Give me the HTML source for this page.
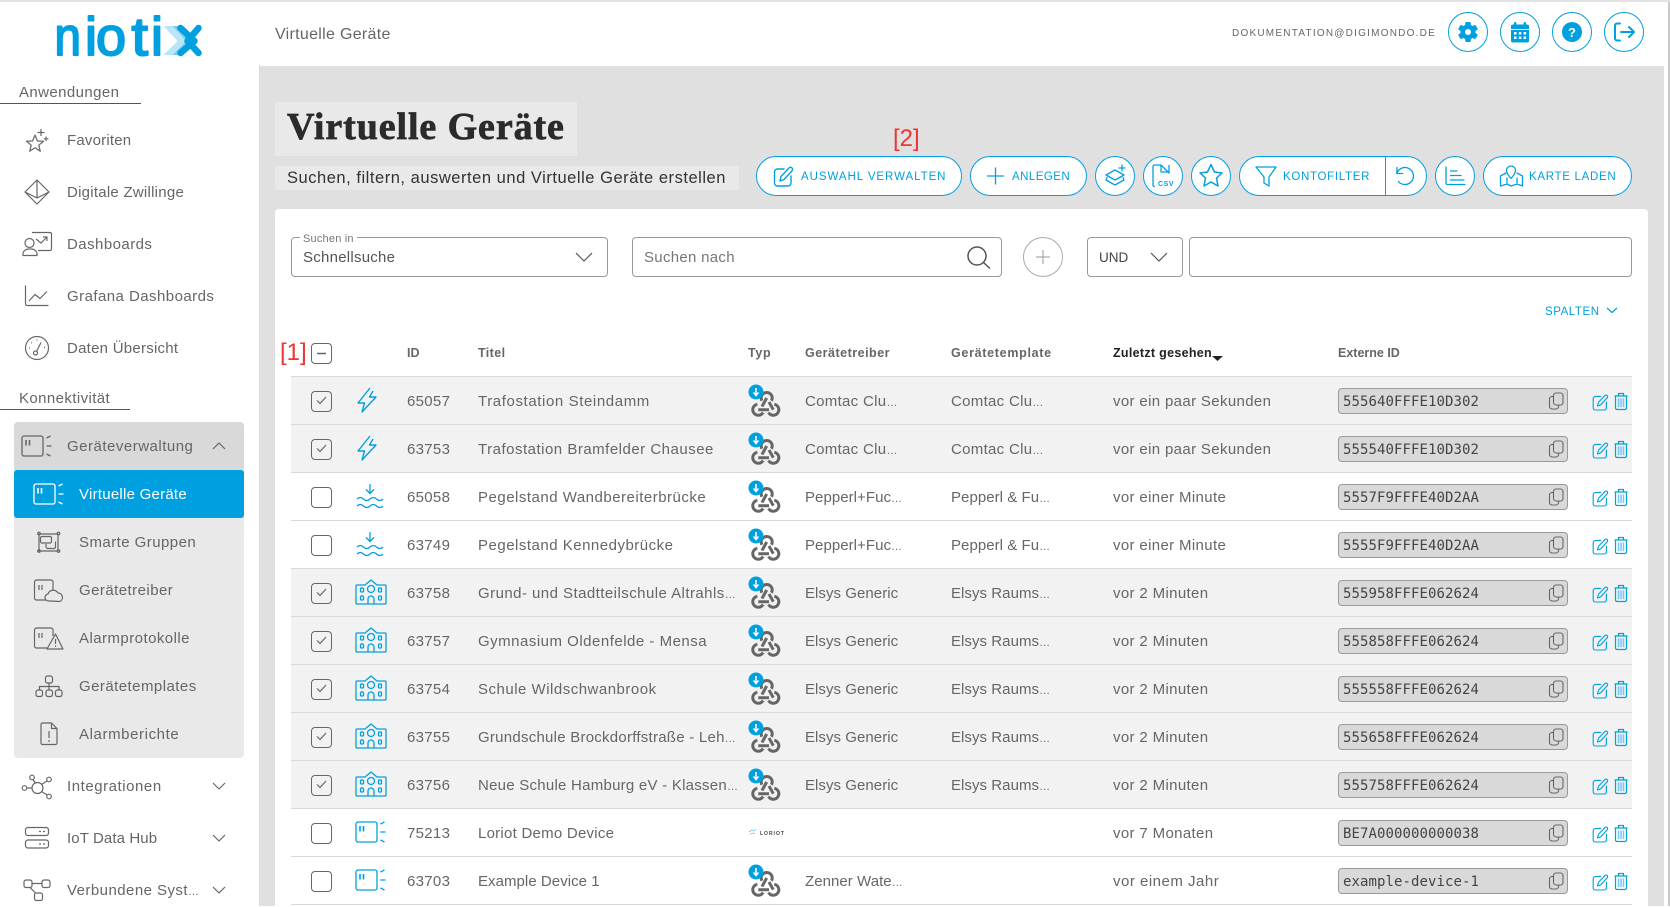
<!DOCTYPE html>
<html lang="de"><head><meta charset="utf-8"><title>Virtuelle Geräte</title>
<style>
*{box-sizing:border-box}
html,body{margin:0;padding:0;width:1670px;height:906px;overflow:hidden;background:#fff;font-family:"Liberation Sans",sans-serif;color:#666}
.a{position:absolute;white-space:nowrap}
svg{position:absolute;overflow:visible}
.ov{left:0;top:0;width:1670px;height:906px;z-index:5;pointer-events:none}
.nav{font-size:15px;letter-spacing:.45px;line-height:20px;color:#666;margin-top:1px}
i{font-style:normal;font-size:11px;letter-spacing:0}
.btn{position:absolute;top:156px;height:40px;background:#fff;border:1.3px solid #00a0e0;border-radius:20px;color:#00a0e0;font-size:11.5px;line-height:40px}
.btn span{position:absolute;white-space:nowrap}
.hbtn{position:absolute;top:12px;width:40px;height:40px;background:#fff;border:1.3px solid #00a0e0;border-radius:50%}
.inp{position:absolute;top:237px;height:40px;border:1.2px solid #999;border-radius:4px;background:#fff}
.th{position:absolute;top:345px;font-size:12.5px;font-weight:700;line-height:16px;color:#666;white-space:nowrap}
.r{position:absolute;left:291px;width:1341px;height:48px;border-top:1px solid #d9d9d9;font-size:15px;letter-spacing:.5px;line-height:48px;color:#666}
.r.s{background:#f2f2f2}
.r>span{position:absolute;top:1px;white-space:nowrap}
.id{left:116px;letter-spacing:.3px}.t{left:187px}.d{left:514px;letter-spacing:.05px}.m{left:660px;letter-spacing:.05px}.l{left:822px;letter-spacing:.35px}
.r>.x{left:1047px;top:11px;width:230px;height:26px;background:#d9d9d9;border:1.3px solid #999;border-radius:4px;font:14px/26px "DejaVu Sans Mono","Liberation Mono",monospace;letter-spacing:.07px;color:#444;padding-left:4px}
.c{position:absolute;left:20px;top:14px;width:21px;height:21px;border:1.5px solid #666;border-radius:4px;background:#fff}
.s .c{background:#f2f2f2}
.rs{left:0;top:-1px;width:1341px;height:48px}
</style></head><body>
<svg width="0" height="0" style="position:absolute"><defs>
<g id="device" fill="none" stroke-width="1.3"><rect x="-10.5" y="-10" width="21" height="20" rx="2"/><path d="M14 -8l4 -2M14 0h5M14 8l4 2"/><path d="M-6.500 -6V-.5M-3 -6V-.5" stroke-width="1.600"/></g>
<g id="bolt" fill="none" stroke="#00a0e0" stroke-width="1.4" stroke-linejoin="round"><path d="M3 -12L-9 3H-2.500L-5 12L9 -3H2.500L6 -9"/></g>
<g id="water" fill="none" stroke="#00a0e0" stroke-width="1.3"><path d="M0 -12V-3M-4 -6.500L0 -2.500L4 -6.500M-13 3q3.200 -3 6.500 0t6.500 0t6.500 0t6.500 0M-13 10q3.200 -3 6.500 0t6.500 0t6.500 0t6.500 0"/></g>
<g id="school" fill="none" stroke="#00a0e0" stroke-width="1.3" stroke-linejoin="round"><path d="M-14 -7H-6L0 -12L6 -7H14a1 1 0 0 1 1 1V11a1 1 0 0 1 -1 1H-14a1 1 0 0 1 -1 -1V-6a1 1 0 0 1 1 -1Z"/><circle cx="0" cy="-3" r="3.500"/><rect x="-10.500" y="-4" width="3" height="4" rx="1"/><rect x="7.500" y="-4" width="3" height="4" rx="1"/><rect x="-10.500" y="4" width="3" height="4" rx="1"/><rect x="7.500" y="4" width="3" height="4" rx="1"/><path d="M-3 12V7a3 3 0 0 1 6 0V12"/></g>
<g id="wh"><g fill="none" stroke="#666" stroke-width="3"><path d="M-4.060 -3.250A5.500 5.500 0 1 1 5.460 -3.250"/><path d="M-8.650 .3A5.500 5.500 0 1 0 -2.940 8.450"/><path d="M2.540 8.450A5.500 5.500 0 1 0 8.250 .3"/><path d="M.7 -6L-4 2.500M-7.700 5.700H3M7.300 5.700L3 -2"/></g><circle cx="-10" cy="-12" r="7.500" fill="#00a0e0"/><path d="M-10 -16V-9M-12.500 -11.500L-10 -8.500L-7.500 -11.500" fill="none" stroke="#fff" stroke-width="1.500"/></g>
<g id="copy" fill="none" stroke="#666" stroke-width="1.100"><rect x="-2.500" y="-8" width="9.500" height="12" rx="2.500"/><path d="M-2.500 -4.500H-4a2.500 2.500 0 0 0 -2.500 2.500V5.500A2.500 2.500 0 0 0 -4 8H0a2.500 2.500 0 0 0 2.500 -2.500V4"/></g>
<g id="edit" fill="none" stroke-width="1.400" stroke-linecap="round" stroke-linejoin="round"><path d="M1 -7H-5.500a3 3 0 0 0 -3 3V7a3 3 0 0 0 3 3H5a3 3 0 0 0 3 -3V0"/><path d="M-3 5L-2 .5L6 -8a1.900 1.900 0 0 1 3 2.800L1 3.500Z"/></g>
<g id="ed" stroke="#00a0e0"><use href="#edit" transform="scale(.8)"/></g>
<g id="trash" fill="none" stroke="#00a0e0" stroke-width="1.200"><path d="M-6.500 -5H6.500M-2.500 -5V-7.500H2.500V-5"/><path d="M-5.500 -5V7a1.500 1.500 0 0 0 1.500 1.500H4A1.500 1.500 0 0 0 5.500 7V-5"/><path d="M-2.500 -2.500V6M0 -2.500V6M2.500 -2.500V6" stroke="#73c8ee" stroke-width="1.500"/></g>
<g id="chk" fill="none" stroke="#666" stroke-width="1.200"><path d="M-4.500 .5L-1.500 3.500L4.500 -3"/></g>
</defs></svg>

<!-- backgrounds -->
<div class="a" style="left:0;top:0;width:1670px;height:2px;background:#e2e2e2"></div>
<div class="a" style="left:259px;top:66px;width:1405px;height:840px;background:#e0e0e0"></div>
<div class="a" style="left:259px;top:65px;width:1px;height:841px;background:#dcdcdc"></div>
<div class="a" style="left:1668px;top:2px;width:2px;height:904px;background:#c9c9c9"></div>

<!-- logo -->
<svg class="ov" style="z-index:6" viewBox="0 0 1670 906">
<g transform="translate(53.500,16)">
<g fill="#00a0e0" stroke="#00a0e0" stroke-width="2" stroke-linejoin="round" font-family="'Liberation Sans',sans-serif" font-size="54">
<text transform="translate(1,39) scale(.88,1)" x="0" y="0">n</text>
<text transform="translate(31.500,39)" x="0" y="0">i</text>
<text transform="translate(42.500,39) scale(1,1)" x="0" y="0">o</text>
<text transform="translate(78,39) scale(1.1,1)" x="0" y="0">t</text>
<text transform="translate(97.500,39)" x="0" y="0">i</text>
</g>
<path d="M110 10H119L133 25L119 39H110L124 25Z" fill="#b8e5f7"/>
<path d="M119 10H126L140 25L126 39H119L133 25Z" fill="#72cdf1"/>
<path d="M127 12L141 25L127 37M145 12L134 25L145 37" fill="none" stroke="#00a0e0" stroke-width="6.500" stroke-linecap="round" stroke-linejoin="round"/>
</g></svg>

<!-- sidebar -->
<div class="a nav" style="left:19px;top:82px;letter-spacing:.4px">Anwendungen</div>
<div class="a" style="left:0;top:103px;width:141px;height:1px;background:#555"></div>
<div class="a nav" style="left:67px;top:130px;letter-spacing:.2px">Favoriten</div>
<div class="a nav" style="left:67px;top:182px;letter-spacing:.25px">Digitale Zwillinge</div>
<div class="a nav" style="left:67px;top:234px">Dashboards</div>
<div class="a nav" style="left:67px;top:286px">Grafana Dashboards</div>
<div class="a nav" style="left:67px;top:338px;letter-spacing:.25px">Daten Übersicht</div>
<div class="a nav" style="left:19px;top:388px;letter-spacing:.4px">Konnektivität</div>
<div class="a" style="left:0;top:409px;width:130px;height:1px;background:#555"></div>
<div class="a" style="left:14px;top:422px;width:230px;height:336px;background:#e9e9e9;border-radius:4px"></div>
<div class="a" style="left:14px;top:422px;width:230px;height:48px;background:#d9d9d9;border-radius:4px 4px 0 0"></div>
<div class="a" style="left:14px;top:470px;width:230px;height:48px;background:#00a0e0;border-radius:3px"></div>
<div class="a nav" style="left:67px;top:436px;letter-spacing:.5px">Geräteverwaltung</div>
<div class="a nav" style="left:79px;top:484px;color:#fff;letter-spacing:.25px">Virtuelle Geräte</div>
<div class="a nav" style="left:79px;top:532px">Smarte Gruppen</div>
<div class="a nav" style="left:79px;top:580px">Gerätetreiber</div>
<div class="a nav" style="left:79px;top:628px">Alarmprotokolle</div>
<div class="a nav" style="left:79px;top:676px">Gerätetemplates</div>
<div class="a nav" style="left:79px;top:724px;letter-spacing:.6px">Alarmberichte</div>
<div class="a nav" style="left:67px;top:776px;letter-spacing:.55px">Integrationen</div>
<div class="a nav" style="left:67px;top:828px;letter-spacing:.1px">IoT Data Hub</div>
<div class="a nav" style="left:67px;top:880px">Verbundene Syst<i>…</i></div>

<!-- header -->
<div class="a" style="left:275px;top:25px;font-size:16px;letter-spacing:.3px;line-height:20px;color:#666">Virtuelle Geräte</div>
<div class="a" style="left:1232px;top:28px;font-size:10px;letter-spacing:1.23px;line-height:12px;color:#666">DOKUMENTATION@DIGIMONDO.DE</div>
<div class="hbtn" style="left:1448px"></div><div class="hbtn" style="left:1500px"></div><div class="hbtn" style="left:1552px"></div><div class="hbtn" style="left:1604px"></div>

<!-- title -->
<div class="a" style="left:275px;top:102px;width:302px;height:54px;background:#e9e9e9"></div>
<div class="a" style="left:287px;top:104px;font:700 38px/46px 'Liberation Serif',serif;letter-spacing:.9px;color:#2b2b2b;-webkit-text-stroke:.7px #2b2b2b">Virtuelle Geräte</div>
<div class="a" style="left:275px;top:166px;width:464px;height:24px;background:#e9e9e9"></div>
<div class="a" style="left:287px;top:167px;font-size:16.5px;letter-spacing:.53px;line-height:22px;color:#333">Suchen, filtern, auswerten und Virtuelle Geräte erstellen</div>
<div class="a" style="left:893px;top:124px;font-size:24px;line-height:30px;color:#f03333">[2]</div>

<!-- buttons -->
<div class="btn" style="left:756px;width:206px"><span style="left:44px;letter-spacing:.95px">AUSWAHL VERWALTEN</span></div>
<div class="btn" style="left:970px;width:117px"><span style="left:41px;letter-spacing:.45px">ANLEGEN</span></div>
<div class="btn" style="left:1095px;width:40px"></div>
<div class="btn" style="left:1143px;width:40px"></div>
<div class="btn" style="left:1191px;width:40px"></div>
<div class="btn" style="left:1239px;width:188px"><span style="left:43px;letter-spacing:.7px">KONTOFILTER</span><span style="left:145px;top:0;width:1.300px;height:38px;background:#00a0e0"></span></div>
<div class="btn" style="left:1435px;width:40px"></div>
<div class="btn" style="left:1483px;width:149px"><span style="left:45px;letter-spacing:.7px">KARTE LADEN</span></div>

<!-- card -->
<div class="a" style="left:275px;top:209px;width:1373px;height:697px;background:#fff;border-radius:4px 4px 0 0"></div>
<div class="inp" style="left:291px;width:317px"></div>
<div class="a" style="left:300px;top:233px;padding:0 3px;background:#fff;font-size:11px;letter-spacing:.2px;line-height:13px;color:#777">Suchen in</div>
<div class="a" style="left:303px;top:248px;font-size:15px;letter-spacing:.25px;line-height:20px;color:#555">Schnellsuche</div>
<div class="inp" style="left:632px;width:370px"></div>
<div class="a" style="left:644px;top:248px;font-size:15px;letter-spacing:.3px;line-height:20px;color:#777">Suchen nach</div>
<div class="a" style="left:1023px;top:237px;width:40px;height:40px;border:1.200px solid #aaa;border-radius:50%"></div>
<div class="inp" style="left:1087px;width:96px"></div>
<div class="a" style="left:1099px;top:248px;font-size:13.500px;line-height:20px;color:#444">UND</div>
<div class="inp" style="left:1189px;width:443px"></div>
<div class="a" style="left:1545px;top:304px;font-size:11.500px;line-height:16px;color:#00a0e0;letter-spacing:.55px">SPALTEN</div>

<!-- table header -->
<div class="a" style="left:280px;top:338px;font-size:24px;line-height:30px;color:#f03333">[1]</div>
<div class="a" style="left:311px;top:343px;width:21px;height:21px;border:1.500px solid #666;border-radius:4px"></div>
<div class="th" style="left:407px">ID</div>
<div class="th" style="left:478px;letter-spacing:.4px">Titel</div>
<div class="th" style="left:748px;letter-spacing:.7px">Typ</div>
<div class="th" style="left:805px;letter-spacing:.5px">Gerätetreiber</div>
<div class="th" style="left:951px;letter-spacing:.7px">Gerätetemplate</div>
<div class="th" style="left:1113px;color:#222;letter-spacing:.3px">Zuletzt gesehen</div>
<div class="th" style="left:1338px">Externe ID</div>

<!-- rows -->
<div class="r s" style="top:376px"><div class="c"></div><span class="id">65057</span><span class="t" style="letter-spacing:.6px">Trafostation Steindamm</span><span class="d" style="letter-spacing:.3px">Comtac Clu<i>…</i></span><span class="m" style="letter-spacing:.3px">Comtac Clu<i>…</i></span><span class="l">vor ein paar Sekunden</span><span class="x">555640FFFE10D302</span><svg class="rs"><use href="#chk" x="30.500" y="24"/><use href="#bolt" x="76" y="24"/><use href="#wh" x="475" y="28"/><use href="#copy" x="1265" y="25"/><use href="#ed" x="1309" y="26"/><use href="#trash" x="1330" y="25"/></svg></div>
<div class="r s" style="top:424px"><div class="c"></div><span class="id">63753</span><span class="t">Trafostation Bramfelder Chausee</span><span class="d" style="letter-spacing:.3px">Comtac Clu<i>…</i></span><span class="m" style="letter-spacing:.3px">Comtac Clu<i>…</i></span><span class="l">vor ein paar Sekunden</span><span class="x">555540FFFE10D302</span><svg class="rs"><use href="#chk" x="30.500" y="24"/><use href="#bolt" x="76" y="24"/><use href="#wh" x="475" y="28"/><use href="#copy" x="1265" y="25"/><use href="#ed" x="1309" y="26"/><use href="#trash" x="1330" y="25"/></svg></div>
<div class="r" style="top:472px"><div class="c"></div><span class="id">65058</span><span class="t">Pegelstand Wandbereiterbrücke</span><span class="d">Pepperl+Fuc<i>…</i></span><span class="m">Pepperl &amp; Fu<i>…</i></span><span class="l">vor einer Minute</span><span class="x">5557F9FFFE40D2AA</span><svg class="rs"><use href="#water" x="79" y="24"/><use href="#wh" x="475" y="28"/><use href="#copy" x="1265" y="25"/><use href="#ed" x="1309" y="26"/><use href="#trash" x="1330" y="25"/></svg></div>
<div class="r" style="top:520px"><div class="c"></div><span class="id">63749</span><span class="t">Pegelstand Kennedybrücke</span><span class="d">Pepperl+Fuc<i>…</i></span><span class="m">Pepperl &amp; Fu<i>…</i></span><span class="l">vor einer Minute</span><span class="x">5555F9FFFE40D2AA</span><svg class="rs"><use href="#water" x="79" y="24"/><use href="#wh" x="475" y="28"/><use href="#copy" x="1265" y="25"/><use href="#ed" x="1309" y="26"/><use href="#trash" x="1330" y="25"/></svg></div>
<div class="r s" style="top:568px"><div class="c"></div><span class="id">63758</span><span class="t" style="letter-spacing:.45px">Grund- und Stadtteilschule Altrahls<i>…</i></span><span class="d">Elsys Generic</span><span class="m">Elsys Raums<i>…</i></span><span class="l">vor 2 Minuten</span><span class="x">555958FFFE062624</span><svg class="rs"><use href="#chk" x="30.500" y="24"/><use href="#school" x="80" y="24"/><use href="#wh" x="475" y="28"/><use href="#copy" x="1265" y="25"/><use href="#ed" x="1309" y="26"/><use href="#trash" x="1330" y="25"/></svg></div>
<div class="r s" style="top:616px"><div class="c"></div><span class="id">63757</span><span class="t">Gymnasium Oldenfelde - Mensa</span><span class="d">Elsys Generic</span><span class="m">Elsys Raums<i>…</i></span><span class="l">vor 2 Minuten</span><span class="x">555858FFFE062624</span><svg class="rs"><use href="#chk" x="30.500" y="24"/><use href="#school" x="80" y="24"/><use href="#wh" x="475" y="28"/><use href="#copy" x="1265" y="25"/><use href="#ed" x="1309" y="26"/><use href="#trash" x="1330" y="25"/></svg></div>
<div class="r s" style="top:664px"><div class="c"></div><span class="id">63754</span><span class="t">Schule Wildschwanbrook</span><span class="d">Elsys Generic</span><span class="m">Elsys Raums<i>…</i></span><span class="l">vor 2 Minuten</span><span class="x">555558FFFE062624</span><svg class="rs"><use href="#chk" x="30.500" y="24"/><use href="#school" x="80" y="24"/><use href="#wh" x="475" y="28"/><use href="#copy" x="1265" y="25"/><use href="#ed" x="1309" y="26"/><use href="#trash" x="1330" y="25"/></svg></div>
<div class="r s" style="top:712px"><div class="c"></div><span class="id">63755</span><span class="t" style="letter-spacing:.25px">Grundschule Brockdorffstraße - Leh<i>…</i></span><span class="d">Elsys Generic</span><span class="m">Elsys Raums<i>…</i></span><span class="l">vor 2 Minuten</span><span class="x">555658FFFE062624</span><svg class="rs"><use href="#chk" x="30.500" y="24"/><use href="#school" x="80" y="24"/><use href="#wh" x="475" y="28"/><use href="#copy" x="1265" y="25"/><use href="#ed" x="1309" y="26"/><use href="#trash" x="1330" y="25"/></svg></div>
<div class="r s" style="top:760px"><div class="c"></div><span class="id">63756</span><span class="t" style="letter-spacing:.25px">Neue Schule Hamburg eV - Klassen<i>…</i></span><span class="d">Elsys Generic</span><span class="m">Elsys Raums<i>…</i></span><span class="l">vor 2 Minuten</span><span class="x">555758FFFE062624</span><svg class="rs"><use href="#chk" x="30.500" y="24"/><use href="#school" x="80" y="24"/><use href="#wh" x="475" y="28"/><use href="#copy" x="1265" y="25"/><use href="#ed" x="1309" y="26"/><use href="#trash" x="1330" y="25"/></svg></div>
<div class="r" style="top:808px"><div class="c"></div><span class="id">75213</span><span class="t" style="letter-spacing:.25px">Loriot Demo Device</span><span style="left:469px;font-size:5px;font-weight:700;letter-spacing:1px;color:#444">LORIOT</span><span class="l">vor 7 Monaten</span><span class="x">BE7A000000000038</span><svg class="rs"><use href="#device" x="75.500" y="24" stroke="#00a0e0"/><path d="M458 24l3 -2l2 1l2 -2M459 26l3 -1l2 1" fill="none" stroke="#73c8ee" stroke-width=".8"/><use href="#copy" x="1265" y="25"/><use href="#ed" x="1309" y="26"/><use href="#trash" x="1330" y="25"/></svg></div>
<div class="r" style="top:856px;border-bottom:1px solid #d9d9d9;height:49px"><div class="c"></div><span class="id">63703</span><span class="t" style="letter-spacing:.05px">Example Device 1</span><span class="d">Zenner Wate<i>…</i></span><span class="l" style="letter-spacing:.5px">vor einem Jahr</span><span class="x">example-device-1</span><svg class="rs"><use href="#device" x="75.500" y="24" stroke="#00a0e0"/><use href="#wh" x="475" y="28"/><use href="#copy" x="1265" y="25"/><use href="#ed" x="1309" y="26"/><use href="#trash" x="1330" y="25"/></svg></div>

<!-- overlay icons -->
<svg class="ov" viewBox="0 0 1670 906">
<g fill="none" stroke="#666" stroke-width="1.200" stroke-linejoin="round">
<path transform="translate(35,144)" d="M0 -9L2.400 -3L8.600 -2.800L3.800 1.200L5.300 7.300L0 3.800L-5.300 7.300L-3.800 1.200L-8.600 -2.800L-2.400 -3Z"/>
<path d="M41 129V136M37.500 132.500H44.500M46 136.500V141M43.800 138.800H48.500"/>
<path d="M37 180L49 192L37 204L25 192ZM25 192L37 198L49 192M37 180V198"/>
<path d="M32 232.500H50a1.500 1.500 0 0 1 1.500 1.500V249a1.500 1.500 0 0 1 -1.500 1.500H38M36 239L41 243L47 237M43 237H47V241"/>
<circle cx="29.500" cy="243" r="4.500"/>
<path d="M23 255.500V253a6 5 0 0 1 6 -4h2a6 5 0 0 1 6 4V255.500Z"/>
<path d="M25.500 285.500V304a1.500 1.500 0 0 0 1.500 1.500H48.500M29 301L35 294.500L40 298.500L47 291.500"/>
<circle cx="37" cy="348" r="11.500"/><circle cx="35.500" cy="353" r="2"/><path d="M36.500 351.500L41 342.500M29 348h1M31 342.500l.7 .7M37 339.500v1M44 347.500h1"/>
<use href="#device" x="32.500" y="446" stroke="#666"/>
<path d="M213 449L219 443L225 449"/>
<use href="#device" x="44.500" y="494" stroke="#fff"/>
<path d="M39 534H58V551H39ZM42 536.500h8a1.500 1.500 0 0 1 1.500 1.500v3.500a1.500 1.500 0 0 1 -1.500 1.500h-8a1.500 1.500 0 0 1 -1.500 -1.500v-3.500a1.500 1.500 0 0 1 1.500 -1.500ZM55.500 541.500V547a1.500 1.500 0 0 1 -1.500 1.500H48a2 2 0 0 1 -2 -2V544"/>
<circle cx="39" cy="533.500" r="1.300"/><circle cx="58.500" cy="533.500" r="1.300"/><circle cx="39" cy="551" r="1.300"/><circle cx="58.500" cy="551" r="1.300"/>
<path d="M47 600H36.500a2 2 0 0 1 -2 -2V582a2 2 0 0 1 2 -2H51a2 2 0 0 1 2 2V590M39 585V590M42 585V590"/>
<path d="M51 601H49a3.500 3.500 0 0 1 -1 -7a5.500 5.500 0 0 1 10 -1a4.500 4.500 0 0 1 2 8.500Z" fill="#e9e9e9"/>
<path d="M47 648H36.500a2 2 0 0 1 -2 -2V630a2 2 0 0 1 2 -2H51a2 2 0 0 1 2 2V636M39 633V638M42 633V638"/>
<path d="M55.500 634L63 649H47Z" fill="#e9e9e9"/><path d="M55.500 639V644M55.500 645.500V647"/>
<rect x="45.500" y="676" width="7" height="7" rx="2"/><rect x="36" y="690" width="6.500" height="6.500" rx="2"/><rect x="46" y="690" width="6.500" height="6.500" rx="2"/><rect x="55.500" y="690" width="6.500" height="6.500" rx="2"/>
<path d="M49 683V690M39.500 690V686.500H59V690"/>
<path d="M42.500 723H51.500L57 728.500V743a1.500 1.500 0 0 1 -1.500 1.500H42.500A1.500 1.500 0 0 1 41 743V724.500A1.500 1.500 0 0 1 42.500 723ZM51.500 723V728.500H57M49 731V738M49 740V742"/>
<circle cx="37.500" cy="788" r="5.500"/><circle cx="32" cy="777.500" r="2.300"/><circle cx="49" cy="779.500" r="2.300"/><circle cx="24.500" cy="788" r="2.300"/><circle cx="49" cy="796.500" r="2.300"/>
<path d="M33 779.500L35.500 783.500M47 781L41.500 784.500M27 788H32M47.300 795L41.500 791.500"/>
<path d="M213 783L219 789L225 783M213 835L219 841L225 835M213 887L219 893L225 887"/>
<rect x="25.500" y="827.500" width="23" height="8" rx="2.500"/><rect x="25.500" y="840" width="23" height="8" rx="2.500"/><path d="M39 831.500h2M43 831.500h2M39 844h2M43 844h2"/>
<rect x="24" y="880" width="8" height="7.500" rx="2"/><rect x="42" y="880" width="8" height="7.500" rx="2"/><rect x="34.500" y="893" width="8" height="7.500" rx="2"/><path d="M32 883.500H42M30 887.500L35.500 893"/>
<path d="M576 253L584 261L592 253M1151 253L1159 261L1167 253" stroke="#555"/>
<circle cx="977" cy="256" r="9" stroke="#555" stroke-width="1.500"/><path d="M983.500 262.500L990 268.500" stroke="#555" stroke-width="1.500"/>
<path d="M1043 250V264M1036 257H1050" stroke="#aaa"/>
<path d="M1607 308L1612 312.500L1617 308" stroke="#00a0e0"/>
<path d="M317 353.500H326" stroke="#666" stroke-width="1.500"/>
</g>
<path d="M1212 356H1223L1217.500 361Z" fill="#222"/>

<!-- action button icons -->
<g fill="none" stroke="#00a0e0" stroke-width="1.300" stroke-linejoin="round" stroke-linecap="round">
<use href="#edit" x="783" y="176" stroke="#00a0e0"/>
<path d="M995.500 168V184M987.500 176H1003.500"/>
<path d="M1106 175L1115 170L1124 175L1115 180ZM1107 177.500L1106 180L1115 185L1124 180L1123 177.500M1122 165V171M1119 168H1125"/>
<path d="M1161 165H1154.500a1.500 1.500 0 0 0 -1.500 1.500V185a1.500 1.500 0 0 0 1.500 1.500M1161 165L1169 173V165.500M1161 165V172H1168"/>
<path d="M1211 164.500L1214.500 172L1222 173L1216.500 178L1218 186L1211 182L1204 186L1205.500 178L1200 173L1207.500 172Z" stroke-width="1.500"/>
<path d="M1256 167H1276L1269 177V186L1264 183V177Z"/>
<path d="M1397 167.500L1396.800 173.500L1402.500 173.500M1397 173A8.500 8.500 0 1 1 1398.500 181.500"/>
<path d="M1446 167V183a1.500 1.500 0 0 0 1.500 1.500H1465M1450.500 171H1457M1450.500 175.500H1461M1450.500 180H1464"/>
<path d="M1511 166a4.500 4.500 0 0 0 -4.500 4.500c0 3 4.500 8 4.500 8s4.500 -5 4.500 -8a4.500 4.500 0 0 0 -4.500 -4.500Z"/>
<path d="M1506 173L1500.500 176V186L1507 184L1511 186L1517 184L1522.500 186V176L1517 173M1507 178V184M1517 178V184"/>
</g>
<text x="1158" y="186" font-family="'Liberation Sans',sans-serif" font-size="7" font-weight="700" fill="#00a0e0" letter-spacing=".6">CSV</text>

<!-- header icons -->
<g fill="#00a0e0">
<g transform="translate(1468,32)"><rect x="-2.800" y="-10" width="5.600" height="20" rx="1.200"/><rect x="-2.800" y="-10" width="5.600" height="20" rx="1.200" transform="rotate(60)"/><rect x="-2.800" y="-10" width="5.600" height="20" rx="1.200" transform="rotate(120)"/><circle r="7.500"/><circle r="3" fill="#fff"/></g>
<g transform="translate(1520,32)"><rect x="-9" y="-7.500" width="18" height="18" rx="2"/><rect x="-6" y="-10" width="2.400" height="4" rx="1"/><rect x="3.600" y="-10" width="2.400" height="4" rx="1"/><rect x="-9" y="-3" width="18" height="1" fill="#fff"/><g fill="#fff"><rect x="-6" y="0" width="2.500" height="2.500"/><rect x="-1.200" y="0" width="2.500" height="2.500"/><rect x="3.600" y="0" width="2.500" height="2.500"/><rect x="-6" y="4.500" width="2.500" height="2.500"/><rect x="-1.200" y="4.500" width="2.500" height="2.500"/><rect x="3.600" y="4.500" width="2.500" height="2.500"/></g></g>
<circle cx="1572" cy="32" r="10"/>
</g>
<text x="1572" y="37" text-anchor="middle" font-family="'Liberation Sans',sans-serif" font-weight="700" font-size="13" fill="#fff">?</text>
<g transform="translate(1624,32)" fill="none" stroke="#00a0e0" stroke-width="2" stroke-linecap="round" stroke-linejoin="round"><path d="M-4 -8.500H-7a2 2 0 0 0 -2 2V6.500a2 2 0 0 0 2 2H-4M-3 0H9M5 -5L10 0L5 5"/></g>
</svg>
</body></html>
